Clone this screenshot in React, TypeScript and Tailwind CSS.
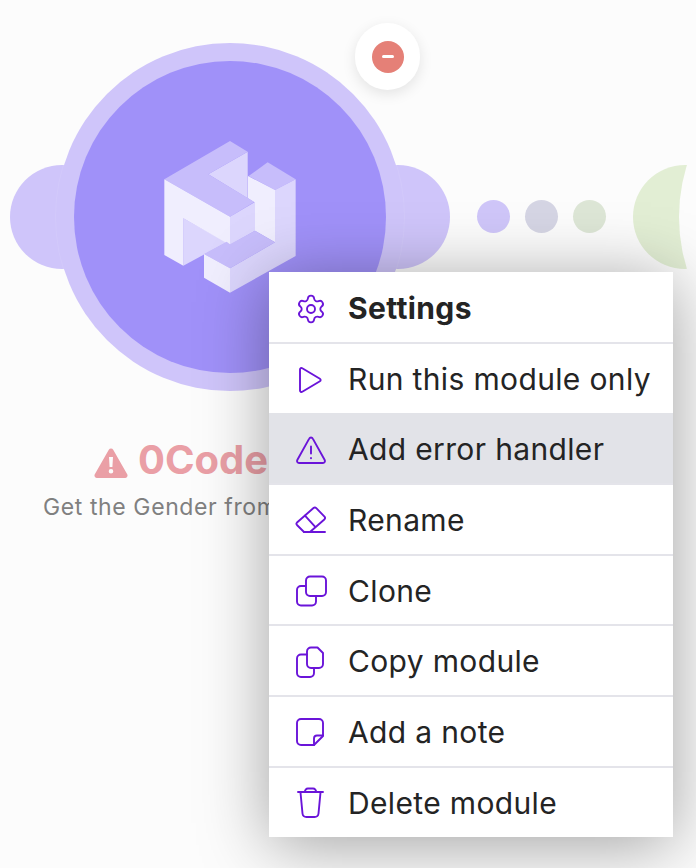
import { Settings } from "lucide-react";
import type { ReactNode } from "react";

const iconProps = {
  viewBox: "0 0 32 32",
  fill: "none",
  stroke: "currentColor",
  strokeWidth: 1.9,
  strokeLinecap: "round" as const,
  strokeLinejoin: "round" as const,
  className: "w-8 h-8",
};

const PlayIcon = () => (
  <svg {...iconProps}>
    <path d="M5 6.5c0-1.2 1.3-1.9 2.3-1.3l17.6 10.5c1 .6 1 2 0 2.6L7.3 28.8C6.3 29.4 5 28.7 5 27.500z" />
  </svg>
);

const WarningIcon = () => (
  <svg {...iconProps}>
    <path d="M14.2 4.6 2.3 26a2 2 0 0 0 1.8 3h23.8a2 2 0 0 0 1.8-3L17.8 4.6a2 2 0 0 0-3.6 0z" />
    <path d="M16 12.5v7M16 24v.2" />
  </svg>
);

const EraserIcon = () => (
  <svg {...iconProps}>
    <path d="M2 18.5 18.5 4a2 2 0 0 1 2.8.2l8.2 8.5a2 2 0 0 1-.2 2.8L15 28H9l-6.8-6.7a2 2 0 0 1-.2-2.8z" />
    <path d="M9 28h21M10 11.6l10 11.1" />
  </svg>
);

const CloneIcon = () => (
  <svg {...iconProps}>
    <rect x="11" y="1.500" width="20" height="19.5" rx="4" />
    <path d="M10 11H6a4 4 0 0 0-4 4v11.500a4 4 0 0 0 4 4h11a4 4 0 0 0 4-4V21" />
  </svg>
);

const CopyIcon = () => (
  <svg {...iconProps}>
    <path d="M16 1.500h6.500l5.500 5.500v11a4 4 0 0 1-4 4h-8a4 4 0 0 1-4-4V5.500a4 4 0 0 1 4-4z" />
    <path d="M12 8.500H6a4 4 0 0 0-4 4V27a4 4 0 0 0 4 4h9a4 4 0 0 0 4-4v-5" />
  </svg>
);

const NoteIcon = () => (
  <svg {...iconProps}>
    <path d="M6 3h18a4 4 0 0 1 4 4v13l-9 9H6a4 4 0 0 1-4-4V7a4 4 0 0 1 4-4z" />
    <path d="M28 19.500h-6a3 3 0 0 0-3 3V29" />
  </svg>
);

const TrashIcon = () => (
  <svg {...iconProps}>
    <path d="M3 5h25M10 5a3 3 0 0 1 3-3.500h5A3 3 0 0 1 21 5" />
    <path d="m5.500 5.500 2 21a4 4 0 0 0 4 3.500h8a4 4 0 0 0 4-3.500l2-21" />
  </svg>
);

const divided = "h-[70.6px] pt-[2px] border-t-2 border-[#e4e4ea]";

const items: { label: string; icon: ReactNode; bold?: boolean; rowClass: string }[] = [
  { label: "Settings", icon: <Settings size={32} strokeWidth={1.4} />, bold: true, rowClass: "h-[70px] pt-[3px]" },
  { label: "Run this module only", icon: <PlayIcon />, rowClass: divided },
  { label: "Add error handler", icon: <WarningIcon />, rowClass: "h-[70.6px] pt-[4px] bg-[#e2e3e8]" },
  { label: "Rename", icon: <EraserIcon />, rowClass: divided },
  { label: "Clone", icon: <CloneIcon />, rowClass: divided },
  { label: "Copy module", icon: <CopyIcon />, rowClass: divided },
  { label: "Add a note", icon: <NoteIcon />, rowClass: divided },
  { label: "Delete module", icon: <TrashIcon />, rowClass: "h-[71.4px] pt-[2px] border-t-2 border-[#e4e4ea]" },
];

function AppLogo() {
  return (
    <svg viewBox="0 0 480 510" className="absolute left-[150px] top-[130px] w-[160px] h-[170px]">
      <polygon fill="#dcd6fd" points="175,133 293,65 293,205" />
      <polygon fill="#c7bdfb" points="296,138 353,97 437,148 375,180" />
      <polygon fill="#f0eefe" points="294,138 375,180 375,337 315,302 315,218 294,205" />
      <polygon fill="#dcd6fd" points="375,180 437,148 437,378 240,488 240,415 375,337" />
      <polygon fill="#c7bdfb" points="43,148 240,33 293,65 175,133 313,216 240,260" />
      <polygon fill="#dcd6fd" points="100,265 230,337 100,407" />
      <polygon fill="#f0eefe" points="43,148 240,260 240,345 100,265 100,407 43,375" />
      <polygon fill="#dcd6fd" points="240,260 315,216 315,302 240,345" />
      <polygon fill="#c7bdfb" points="162,372 230,335 240,343 315,302 375,337 240,415" />
      <polygon fill="#f0eefe" points="162,372 240,415 240,488 162,443" />
    </svg>
  );
}

export default function App() {
  return (
    <div className="relative w-[696px] h-[868px] overflow-hidden bg-[#fcfcfc] font-['Inter',sans-serif]">
      {/* module node */}
      <div className="absolute left-[10px] top-[165px] w-[440px] flex justify-between">
        <div className="w-[104px] h-[104px] rounded-full bg-[#cfc5fa]" />
        <div className="w-[104px] h-[104px] rounded-full bg-[#cfc5fa]" />
      </div>
      <div className="absolute left-[56px] top-[43px] w-[348px] h-[348px] rounded-full bg-[#cfc5fa] shadow-[0_0_0_1px_rgba(255,255,255,0.08)] flex items-center justify-center">
        <div className="w-[312px] h-[312px] rounded-full bg-[#a091f9]" />
      </div>
      <AppLogo />

      {/* remove button */}
      <div className="absolute left-[355px] top-[23px] w-[65px] h-[67px] rounded-full bg-white shadow-[0_4px_14px_rgba(0,0,0,0.1)] flex items-center justify-center">
        <div className="w-8 h-8 rounded-full bg-[#e58077] flex items-center justify-center">
          <div className="w-3 h-[3px] rounded-full bg-white" />
        </div>
      </div>

      {/* connection dots */}
      <div className="absolute left-[477px] top-[200px] flex gap-[15px]">
        <div className="w-[33px] h-[33px] rounded-full bg-[#cfc6f9]" />
        <div className="w-[33px] h-[33px] rounded-full bg-[#d5d5e4]" />
        <div className="w-[33px] h-[33px] rounded-full bg-[#dde6d6]" />
      </div>

      {/* next module, cut off by the window */}
      <div className="absolute left-[633px] top-[165px] w-[104px] h-[104px] rounded-full bg-[#e2eed4]" />
      <div className="absolute left-[679px] top-[43px] w-[348px] h-[348px] rounded-full bg-[#fcfcfc]" />

      {/* module label */}
      <div className="absolute left-[43px] top-[436px] flex flex-col gap-[9px]">
        <div className="flex items-center gap-[10px] pl-[51px] text-[#ea9fa6]">
          <svg viewBox="0 0 34 30" className="w-[34px] h-[30px] mt-[6px]">
            <path fill="currentColor" d="M14.800 1.800a2.500 2.500 0 0 1 4.400 0l14 24.500a2.500 2.500 0 0 1-2.200 3.700H3a2.500 2.500 0 0 1-2.200-3.700z" />
            <path fill="#fcfcfc" d="M15 9h4l-.6 10h-2.800zM17 21a2.300 2.300 0 1 1 0 4.600 2.300 2.300 0 0 1 0-4.600z" />
          </svg>
          <span className="text-[40px] leading-[48px] font-bold">0Code</span>
        </div>
        <p className="text-[23px] leading-[28px] tracking-[0.6px] text-[#808080] whitespace-nowrap">
          Get the Gender from
        </p>
      </div>

      {/* context menu */}
      <div className="absolute left-[269px] top-[272px] w-[404px] flex flex-col bg-white shadow-[0_8px_64px_rgba(0,0,0,0.36)]">
        {items.map((item) => (
          <div
            key={item.label}
            className={`flex items-center gap-[21px] pl-[26px] text-[30px] tracking-[0.35px] text-[#242424] ${item.rowClass} ${item.bold ? "font-bold" : ""}`}
          >
            <span className="text-[#6a14d9] w-8 h-8 flex-none">{item.icon}</span>
            <span className="whitespace-nowrap">{item.label}</span>
          </div>
        ))}
      </div>
    </div>
  );
}
